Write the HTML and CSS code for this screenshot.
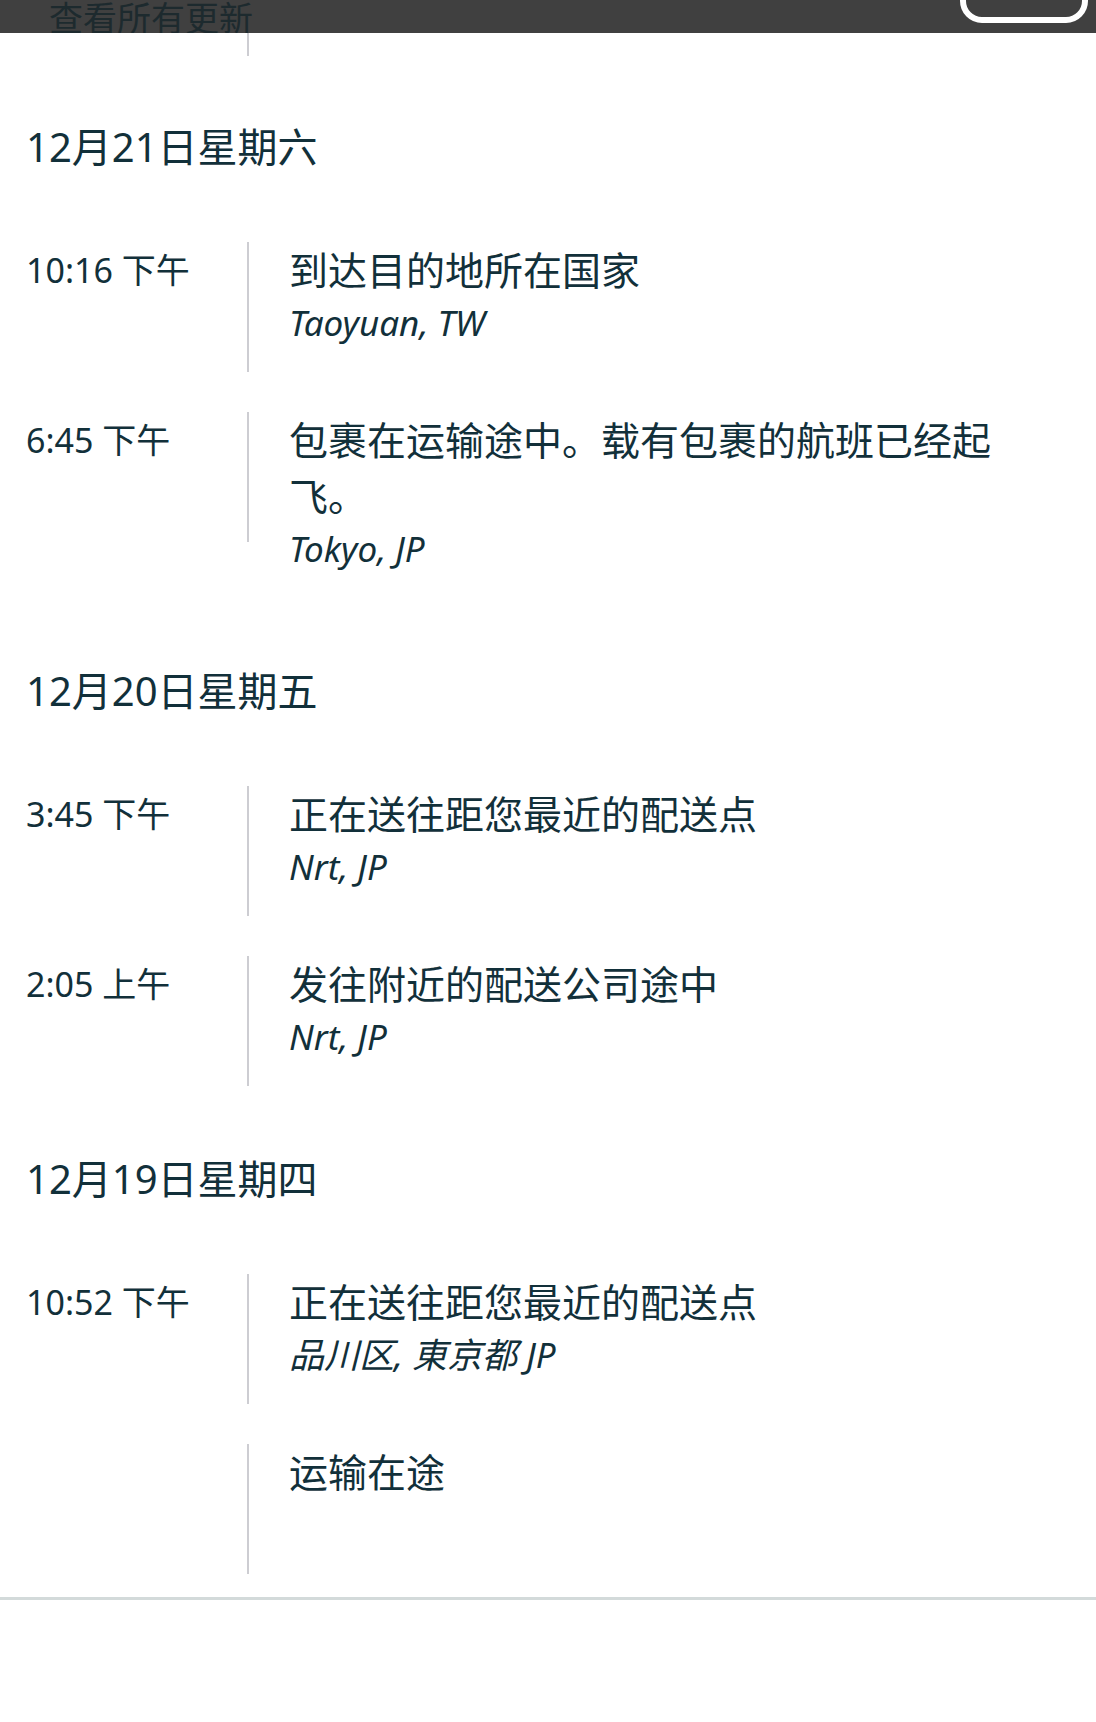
FILE: index.html
```html
<!DOCTYPE html>
<html lang="zh-CN">
<head>
  <meta charset="UTF-8" />
  <meta name="viewport" content="width=device-width, initial-scale=1.0"/>
  <title>包裹追踪</title>
  <link rel="stylesheet" href="styles.css">
</head>
<body>

  <!-- dimmed top bar -->
  <div class="topbar">
    <span class="see-all">查看所有更新</span>
    <span class="close-pill"></span>
  </div>

  <div class="timeline">

    <div class="tail">
      <div class="rail rail-short"></div>
    </div>

    <section class="day">
      <h2 class="day-title">12月21日星期六</h2>

      <div class="event">
        <div class="event-time">10:16 下午</div>
        <div class="rail"></div>
        <div class="event-body">
          <p class="event-title">到达目的地所在国家</p>
          <p class="event-place">Taoyuan, TW</p>
        </div>
      </div>

      <div class="event">
        <div class="event-time">6:45 下午</div>
        <div class="rail"></div>
        <div class="event-body">
          <p class="event-title">包裹在运输途中。载有包裹的航班已经起飞。</p>
          <p class="event-place">Tokyo, JP</p>
        </div>
      </div>
    </section>

    <section class="day">
      <h2 class="day-title">12月20日星期五</h2>

      <div class="event">
        <div class="event-time">3:45 下午</div>
        <div class="rail"></div>
        <div class="event-body">
          <p class="event-title">正在送往距您最近的配送点</p>
          <p class="event-place">Nrt, JP</p>
        </div>
      </div>

      <div class="event">
        <div class="event-time">2:05 上午</div>
        <div class="rail"></div>
        <div class="event-body">
          <p class="event-title">发往附近的配送公司途中</p>
          <p class="event-place">Nrt, JP</p>
        </div>
      </div>
    </section>

    <section class="day">
      <h2 class="day-title">12月19日星期四</h2>

      <div class="event">
        <div class="event-time">10:52 下午</div>
        <div class="rail"></div>
        <div class="event-body">
          <p class="event-title">正在送往距您最近的配送点</p>
          <p class="event-place">品川区, 東京都 JP</p>
        </div>
      </div>

      <div class="event">
        <div class="event-time"></div>
        <div class="rail"></div>
        <div class="event-body">
          <p class="event-title">运输在途</p>
        </div>
      </div>
    </section>

  </div>

</body>
</html>
```

FILE: styles.css
```css
* {
  box-sizing: border-box;
  margin: 0;
  padding: 0;
}

body {
  font-family: "Noto Sans", "Noto Sans CJK SC", sans-serif;
  background: #ffffff;
  color: #12303a;
}

.topbar {
  height: 33px;
  background: #404040;
  display: flex;
  align-items: flex-end;
  justify-content: space-between;
  padding: 0 8px 0 49px;
  overflow: hidden;
}

.see-all {
  font-size: 34px;
  line-height: 40px;
  color: #1d2a2e;
  margin-bottom: -5px;
  white-space: nowrap;
}

.close-pill {
  flex-shrink: 0;
  width: 128px;
  height: 60px;
  margin-bottom: 10px;
  border: 6px solid #ffffff;
  border-radius: 22px;
}

.timeline {
  padding: 0 86px 23px 26px;
  border-bottom: 3px solid #d3dada;
}

.tail {
  display: flex;
  padding-left: 221px;
}

.rail {
  flex-shrink: 0;
  width: 2px;
  height: 130px;
  background: #cdcdd2;
}

.rail-short {
  height: 23px;
}

.day {
  margin-top: 63px;
}

.day-title {
  font-size: 40px;
  line-height: 56px;
  font-weight: 400;
  margin-bottom: 67px;
}

.event {
  display: flex;
  align-items: flex-start;
  margin-bottom: 38px;
}

.event:last-child {
  margin-bottom: 0;
}

.event-time {
  flex-shrink: 0;
  width: 221px;
  font-size: 34px;
  line-height: 56px;
  white-space: nowrap;
}

.event-body {
  flex: 1;
  min-width: 0;
  padding: 0 0 26px 40px;
}

.event-title {
  font-size: 39px;
  line-height: 56px;
}

.event-place {
  font-size: 35px;
  line-height: 50px;
  font-style: italic;
}
```
